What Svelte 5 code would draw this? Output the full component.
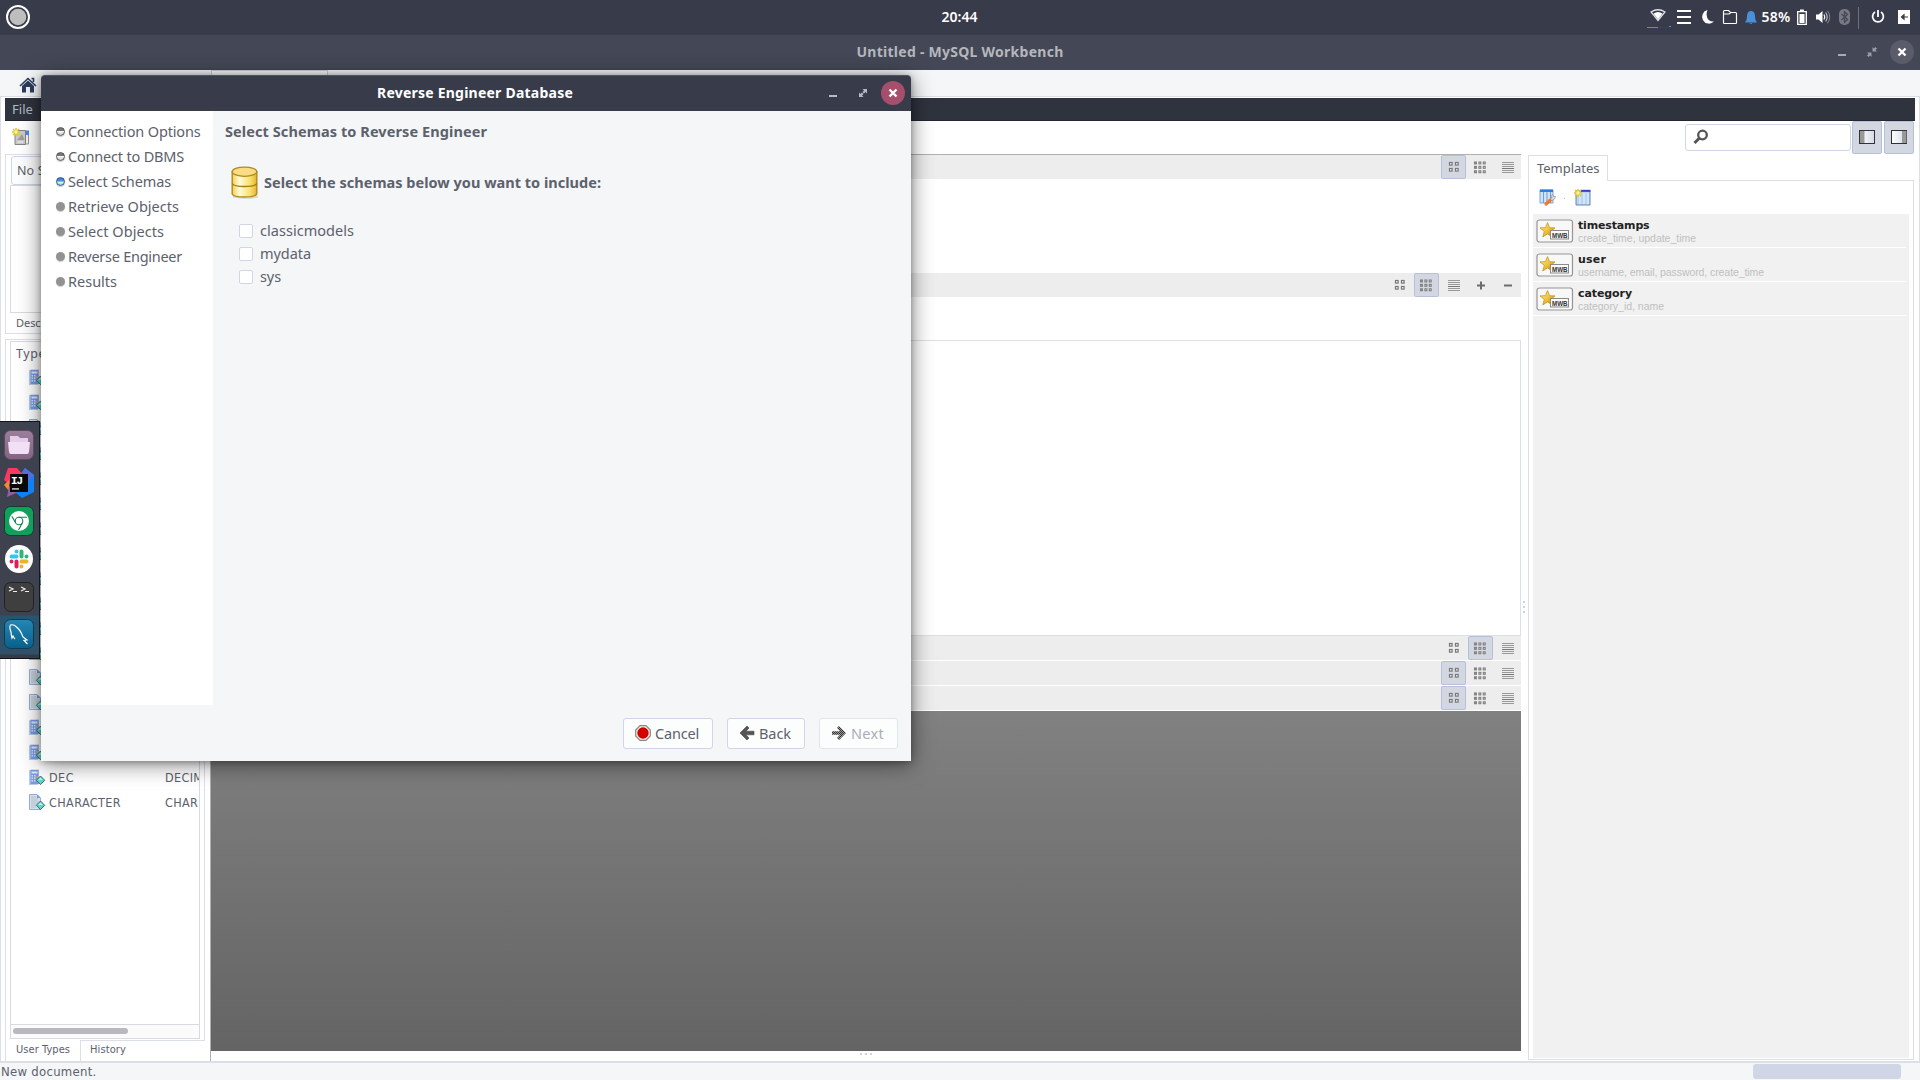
<script>
  // Spreads or tightens a label so it fills the given width in pixels.
  function fit(node, width) {
    const natural = node.getBoundingClientRect().width;
    const count = node.textContent.length;
    node.style.letterSpacing = `${(width - natural) / count}px`;
  }

  const steps = [
    ['Connection Options', 'done', 132.5],
    ['Connect to DBMS', 'done', 116],
    ['Select Schemas', 'current', 103],
    ['Retrieve Objects', 'todo', 111],
    ['Select Objects', 'todo', 96],
    ['Reverse Engineer', 'todo', 114],
    ['Results', 'todo', 49]
  ];
  const schemas = [['classicmodels', 94], ['mydata', 51], ['sys', 21]];
  const types = [
    ...Array.from({ length: 12 }, (_, i) => ({ kind: i < 2 ? 'calc' : 'doc', name: '', def: '' })),
    { kind: 'doc' }, { kind: 'doc' }, { kind: 'calc' }, { kind: 'calc' },
    { kind: 'calc', name: 'DEC', nw: 25, def: 'DECIMAL', dw: 53 },
    { kind: 'doc', name: 'CHARACTER', nw: 72, def: 'CHAR', dw: 33 }
  ];
  const templates = [
    ['timestamps', 'create_time, update_time', 71.5, 118],
    ['user', 'username, email, password, create_time', 28, 186],
    ['category', 'category_id, name', 54, 86]
  ];
</script>

{#snippet grid4()}
  <svg width="12" height="12" viewBox="0 0 12 12" fill="#f8f8f8" stroke="#777" stroke-width="1.2">
    {#each [1.5, 7.5] as y}{#each [1.500, 7.5] as x}<rect {x} {y} width="2.6" height="2.6" />{/each}{/each}
  </svg>
{/snippet}
{#snippet grid9()}
  <svg width="13" height="13" viewBox="0 0 13 13" fill="#e4e4e4" stroke="#808080" stroke-width="1.1">
    {#each [1, 5.4, 9.8] as y}{#each [.5, 4.9, 9.3] as x}<rect {x} {y} width="1.900" height="1.900" />{/each}{/each}
  </svg>
{/snippet}
{#snippet list()}
  <svg width="13" height="14" viewBox="0 0 13 14">
    {#each [2, 4, 6, 8, 10, 12] as y}<rect x="1" {y} width="12" height="1" fill={y === 8 ? '#777' : '#999'} />{/each}
  </svg>
{/snippet}
{#snippet views(active, edit)}
  <div class="views">
    <span class:active={active === 4}>{@render grid4()}</span>
    <span class:active={active === 9}>{@render grid9()}</span>
    <span>{@render list()}</span>
    {#if edit}
      <span><svg width="9" height="9"><path d="M5 .5v8M1 4.500h8" stroke="#6c6c6c" stroke-width="2" /></svg></span>
      <span><svg width="9" height="9"><path d="M1 4.500h8" stroke="#6c6c6c" stroke-width="2" /></svg></span>
    {/if}
  </div>
{/snippet}
{#snippet typeIcon(kind)}
  <svg class="ticon" width="16" height="17" viewBox="0 0 16 17">
    {#if kind === 'calc'}
      <path d="M0 1.500 1.500.5h8.500v14L8.500 16H0z" fill="#b9cbe6" /><path d="M1.500 1h8v14h-8z" fill="#789be0" />
      <path d="M2.500 2.500h6v2h-6z" fill="#dbe9ff" />
      <path d="M2.500 6h1.500v1.500H2.500zM5 6h1.500v1.500H5zM2.500 8.500h1.500V10H2.500zM5 8.500h1.500V10H5zM2.500 11h1.500v1.500H2.500zM5 11h1.500v1.500H5z" fill="#cfe0ff" />
      <path d="M7.300 7h1.700v2H7.300z" fill="#f0946e" />
    {:else}
      <path d="M.5.5h7.500l3.500 3.500v11.500H.5z" fill="#d5dfec" stroke="#7f9cc6" stroke-width=".8" /><path d="M8 .5V4h3.500z" fill="#6e9be0" />
      <path d="M2 3h5M2 5h7M2 7h7M2 9h7M2 11h5M2 13h5" stroke="#a9b6bd" stroke-width=".8" />
    {/if}
    <path d="M11.500 7 15.700 11.300 11.500 15.600 7.300 11.300z" fill="#58d8c4" stroke="#3e6a78" /><path d="M11.500 8.500 14 11H9z" fill="#b8f5ea" />
  </svg>
{/snippet}
{#snippet star()}
  <svg width="38" height="25" viewBox="0 0 38 25">
    <defs><linearGradient id="starfill" x1="0" y1="0" x2="1" y2="1"><stop offset="0" stop-color="#fff3a0" /><stop offset=".5" stop-color="#f2c53c" /><stop offset="1" stop-color="#b97d18" /></linearGradient></defs>
    <rect x="1" y="1" width="35.500" height="22" rx="2.500" fill="#f8f8f8" stroke="#969696" stroke-width="1.200" />
    <path d="m11.500 3.500 2 5.200 5.500.2-4.300 3.500 1.500 5.500-4.700-3-4.700 3 1.500-5.500L4 8.900l5.500-.2z" fill="url(#starfill)" stroke="#c39426" stroke-width=".8" />
    <rect x="14.500" y="11.500" width="18" height="8.500" fill="#fafafa" stroke="#8a8a8a" />
    <text x="16" y="18.800" textLength="15.500" lengthAdjust="spacingAndGlyphs" class="mwb">MWB</text>
  </svg>
{/snippet}
{#snippet sparkle()}
  <path d="M4 0v8M0 4h8M1 1l6 6M7 1 1 7" stroke="#e6c52c" stroke-width="1.500" /><circle cx="4" cy="4" r="1.800" fill="#fff6a0" />
{/snippet}

<div class="screen">
  <header class="top">
    <svg class="logo" width="24" height="24"><circle cx="12" cy="12" r="11" fill="none" stroke="#fff" stroke-width="2" /><circle cx="12" cy="12" r="8.300" fill="#bebebe" /></svg>
    <span class="clock"><b use:fit={36}>20:44</b></span>
    <div class="tray">
      <svg style:width="24px" viewBox="0 0 24 24"><path d="M4 7Q11 2.500 18 7L11 15.500z" fill="none" stroke="#dfe1e8" stroke-width="1.300" /><path d="M6.500 8.500Q11 5.500 15.500 8.500L11 14.500z" fill="#fff" /><path d="M0 22.500h11M22 21.500h2" stroke="#4c91dd" /><path d="M11 22.500h11" stroke="#2b4468" /></svg>
      <svg style:width="26px" viewBox="0 0 26 24"><path d="M6 6h14M6 12h14M6 18h14" stroke="#fff" stroke-width="2" /></svg>
      <svg style:width="22px" viewBox="0 0 22 24"><path d="M10.500 5a6.900 6.900 0 1 0 6.500 11.500C11 17.500 8 11 10.500 5z" fill="#fff" /></svg>
      <svg style:width="22px" viewBox="0 0 22 24"><path d="M4.500 18V6.500q0-1 1-1h4l2 2h5q1 0 1 1V18q0 .5-1 .5h-11q-1 0-1-.5zM4.500 9h5.500l2-1.500" fill="none" stroke="#fff" stroke-width="1.200" /></svg>
      <svg style:width="20px" viewBox="0 0 20 24"><path d="M4 17.500q2-2 2-6Q6 6 10 6t4 5.500q0 4 2 6zM8.500 18h3q-1.500 2-3 0z" fill="#4a90d9" /></svg>
      <span class="pct"><b use:fit={29}>58%</b></span>
      <svg style:width="22px" viewBox="0 0 22 24"><path d="M6.700 6.700h8.600v12.600H6.700z" fill="none" stroke="#fff" stroke-width="1.300" /><path d="M8.500 9h5v9h-5zM9 4.500h4v1.500H9z" fill="#fff" /></svg>
      <svg style:width="20px" viewBox="0 0 20 24"><path d="M3 9.500h2.500L9.500 6v12L5.500 14.500H3z" fill="#fff" /><path d="M11 9.500q1.500 2.500 0 5" fill="none" stroke="#fff" stroke-width="1.200" /><path d="M12.700 7.500q3 4.500 0 9" fill="none" stroke="#c5c7cd" stroke-width="1.100" /><path d="M14.500 5.800q4.500 6 0 12.500" fill="none" stroke="#868994" /></svg>
      <svg style:width="23px" viewBox="0 0 23 24"><rect x="6" y="4" width="11" height="16" rx="5" fill="#777a84" /><path d="m8.500 9 6 5.500-3 2.800V6.700l3 2.800-6 5.500" fill="none" stroke="#444755" stroke-width="1.200" /></svg>
      <i></i>
      <svg style:width="34px" viewBox="0 0 34 24"><path d="M14 7a5.400 5.400 0 1 0 6 0M17 5v7" fill="none" stroke="#fff" stroke-width="1.800" /></svg>
      <svg style:width="18px" viewBox="0 0 18 24"><path d="M3 5h12v14H3z" fill="#fff" /><path d="M6 12h7M9 9.800 6.500 12l2.500 2.200z" fill="#383b49" stroke="#383b49" stroke-width="1.200" /></svg>
    </div>
  </header>
  <div class="apptitle">
    <b use:fit={207}>Untitled - MySQL Workbench</b>
    <div class="wm">
      <svg width="8" height="12"><path d="M0 9h8" stroke="#a9abb3" stroke-width="2" /></svg>
      <svg width="10" height="10" viewBox="0 0 10 10"><path d="M5.500 0v4.500H10L8.500 3 10 1.500 8.500 0 7 1.500zM4.500 10V5.500H0L1.500 7 0 8.500 1.500 10 3 8.500z" fill="#9a9ca6" /></svg>
      <svg width="24" height="24"><circle cx="12" cy="12" r="12" fill="#5a5d69" /><path d="m8.500 8.500 7 7m0-7-7 7" stroke="#fff" stroke-width="2.400" /></svg>
    </div>
  </div>
  <div class="tabstrip">
    <svg width="18" height="16" viewBox="0 0 18 16"><path d="M3 9v6.500h4V10h4v5.500h4V9L9 3.500z" fill="#2b3c5e" /><path d="M1 9 9 1.500 17 9M12.500 1.500h2V5" fill="none" stroke="#2b3c5e" stroke-width="1.600" /></svg>
    <div class="doctab"></div>
  </div>

  <div class="app">
    <nav><span use:fit={21}>File</span></nav>
    <div class="toolbar">
      <svg width="18" height="18" viewBox="0 0 18 18"><path d="M9 5h7.500v11H9z" fill="#f4f4f4" stroke="#999" /><path d="M13 2.500h4v4.500h-4z" fill="#4b8de0" /><path d="M3 2.500h10.500v14H3z" fill="#c9c9c9" stroke="#858585" /><path d="M5.500 14h6" stroke="#f4f4f4" /><path d="m5 12 2-2 3-4 2.500 6z" fill="#9e9e9e" /><g>{@render sparkle()}</g></svg>
      <div class="right">
        <div class="search"><svg width="16" height="16" viewBox="0 0 16 16"><circle cx="9.500" cy="6" r="4.300" fill="none" stroke="#555" stroke-width="2.300" /><path d="M6.500 9 1.500 14" stroke="#555" stroke-width="3" /></svg></div>
        {#each [1, 11] as x}
          <div class="toggle"><svg width="16" height="14" viewBox="0 0 16 14"><defs><linearGradient id="pane" x2="1"><stop stop-color="#fff" /><stop offset="1" stop-color="#d5dbe6" /></linearGradient></defs><rect x=".5" y=".5" width="15" height="13" fill="url(#pane)" stroke="#333" /><rect {x} y="1" width="4.500" height="12" fill="#999" /></svg></div>
        {/each}
      </div>
    </div>
    <main>
      <aside class="left">
        <section class="desc">
          <div class="select"><span use:fit={75}>No Selection</span></div>
          <div class="area"></div>
          <small><span use:fit={92}>Description Editor</span></small>
        </section>
        <section class="types">
          <div class="tree">
            <div class="thead"><span use:fit={30}>Type</span></div>
            {#each types as t}
              <div class="trow">
                {@render typeIcon(t.kind)}
                {#if t.name}<span class="tname"><span use:fit={t.nw}>{t.name}</span></span><span use:fit={t.dw}>{t.def}</span>{/if}
              </div>
            {/each}
            <div class="scroll"><div></div></div>
          </div>
        </section>
        <div class="ltabs"><div class="on"><span use:fit={54}>User Types</span></div><div class="off"><span use:fit={36}>History</span></div></div>
      </aside>

      <section class="center">
        <div class="bar">{@render views(4, false)}</div>
        <div class="blank"></div>
        <div class="bar">{@render views(9, true)}</div>
        <div class="blank small"></div>
        <div class="sheet"></div>
        <div class="bar">{@render views(9, false)}</div>
        <div class="bar">{@render views(4, false)}</div>
        <div class="bar">{@render views(4, false)}</div>
        <div class="canvas"></div>
        <div class="grip"><i></i><i></i><i></i></div>
      </section>
      <div class="vgrip"><i></i><i></i><i></i></div>

      <aside class="rightpane">
        <div class="rtab"><span use:fit={62.5}>Templates</span></div>
        <div class="panel">
          <div class="ptools">
            <svg width="17" height="17" viewBox="0 0 17 17"><path d="M1 1h13v13H1z" fill="#cfe2f8" stroke="#7aa5dc" /><path d="M1 .5h13v2.500H1z" fill="#2d7ee0" /><path d="M4.500 3v11M8 3v11M11.500 3v11" stroke="#6e9dda" /><path d="m7 15 5.500-5" stroke="#ee7a2c" stroke-width="3.200" stroke-linecap="round" /><path d="m11 10 2-1.500-.5-2 1.500-1 .5 2h2l-.5 2-3 2z" fill="#ddd" stroke="#888" stroke-width=".6" /></svg>
            <i></i>
            <svg width="17" height="17" viewBox="0 0 17 17"><path d="M2 2h14v14H2z" fill="#b9d3f3" stroke="#6686b4" /><path d="M7 .8h9.500v2H7z" fill="#3a3cd0" /><path d="M6 4v11M10 4v11M14 4v11" stroke="#eef6ff" /><g>{@render sparkle()}</g></svg>
          </div>
          <div class="tlist">
            {#each templates as [name, cols, nw, cw]}
              <div class="tpl">{@render star()}<div><b><span use:fit={nw}>{name}</span></b><em><span use:fit={cw}>{cols}</span></em></div></div>
            {/each}
          </div>
        </div>
      </aside>
    </main>
  </div>
  <footer><span use:fit={95.500}>New document.</span><div></div></footer>

  <div class="dialog">
    <div class="dtitle">
      <b use:fit={196}>Reverse Engineer Database</b>
      <div class="wm">
        <svg width="8" height="12"><path d="M0 9h8" stroke="#b8bac1" stroke-width="2" /></svg>
        <svg width="10" height="10" viewBox="0 0 10 10"><path d="M4.500 1H9v4.500L7.500 4 6 5.500 4.500 4 6 2.500zM5.500 9H1V4.500L2.500 6 4 4.500 5.500 6 4 7.500z" fill="#b8bac1" /></svg>
        <svg width="24" height="24"><circle cx="12" cy="12" r="12" fill="#a54f6d" /><path d="m8.500 8.500 7 7m0-7-7 7" stroke="#fff" stroke-width="2.400" /></svg>
      </div>
    </div>
    <div class="dbody">
      <ul>
        {#each steps as [label, state, w]}<li><i class={state}></i><span use:fit={w}>{label}</span></li>{/each}
      </ul>
      <div class="content">
        <h1><span use:fit={262}>Select Schemas to Reverse Engineer</span></h1>
        <div class="prompt">
          <svg width="27" height="34" viewBox="0 0 27 34">
            <defs><linearGradient id="gold" x2="1"><stop stop-color="#f4cf50" /><stop offset=".3" stop-color="#fffbd8" /><stop offset=".75" stop-color="#f9de68" /><stop offset="1" stop-color="#e3b42e" /></linearGradient></defs>
            <path d="M2 29.500q12 5 25 0v2q-12 2.500-25 0z" fill="#0002" />
            <path d="M1.200 6v22C3 32 24 32 25.800 28V6z" fill="url(#gold)" stroke="#b08a1c" stroke-width="1.400" />
            <path d="M1.200 17.500c2 4 22.600 4 24.600 0" fill="none" stroke="#a37c12" stroke-width="1.400" />
            <ellipse cx="13.500" cy="5.700" rx="12.300" ry="4.600" fill="#fbdc86" stroke="#b08a1c" stroke-width="1.300" />
          </svg>
          <b use:fit={337}>Select the schemas below you want to include:</b>
        </div>
        {#each schemas as [name, w]}<label><i></i><span use:fit={w}>{name}</span></label>{/each}
      </div>
    </div>
    <div class="actions">
      <button class="cancel"><svg width="16" height="16" viewBox="0 0 16 16"><path d="M5 .7h6L15.300 5v6L11 15.300H5L.7 11V5z" fill="#eee" stroke="#85897d" stroke-width="1.200" /><circle cx="8" cy="8" r="5.700" fill="#d40000" /></svg><span use:fit={44}>Cancel</span></button>
      <button class="back"><svg width="16" height="16" viewBox="0 0 16 16"><path d="m1 8 7-7 2 2-3 3.200h8v3.600H7l3 3.200-2 2z" fill="#555" stroke="#444" stroke-width=".6" /></svg><span use:fit={32}>Back</span></button>
      <button class="next"><svg width="16" height="16" viewBox="0 0 16 16"><defs><pattern id="dither" width="2" height="2" patternUnits="userSpaceOnUse"><rect width="2" height="2" fill="#999" /><path d="M0 0h1v1H0zM1 1h1v1H1z" fill="#333" /></pattern></defs><path d="M15 8 8 1 6 3l3 3.200H1v3.600h8L6 13l2 2z" fill="url(#dither)" /></svg><span use:fit={33}>Next</span></button>
    </div>
  </div>

  <div class="dock">
    <svg width="30" height="30" viewBox="0 0 30 30"><defs><linearGradient id="mauve" y2="1" x2="0"><stop stop-color="#9b7f9a" /><stop offset="1" stop-color="#836383" /></linearGradient></defs><rect x=".5" y=".5" width="29" height="29" rx="6" fill="url(#mauve)" stroke="#5b4a60" /><path d="M6 6h8l2 2h8v5H6z" fill="#e6cdea" /><path d="M4 12h22l-1 10q-.2 2-2 2H7q-1.800 0-2-2z" fill="#f1e0f5" /></svg>
    <svg width="30" height="30" viewBox="0 0 30 30"><path d="M4 0h9l6 7-6 12-8-3-5-4z" fill="#fc3764" /><path d="m0 17 5-5v11z" fill="#f28c26" /><path d="m5 18 12 5-14 6z" fill="#955aa5" /><path d="m21 0 9 7v17l-12 6-6-5 4-18z" fill="#1080f8" /><path d="m21 0 9 7-6 7-8-7z" fill="#5370d8" /><path d="M6 6h18v18H6z" fill="#080808" /><path d="M8 20h7v1.800H8z" fill="#aaa" /><text x="7" y="16" textLength="12" class="ij">IJ</text></svg>
    <svg width="30" height="30" viewBox="0 0 30 30"><rect x=".5" y=".5" width="29" height="29" rx="6" fill="#10a05c" stroke="#123c30" /><circle cx="15" cy="15" r="10" fill="#fff" /><circle cx="15" cy="15" r="3.800" fill="none" stroke="#16804f" stroke-width="1.100" /><path d="M15 11.200h8M11.700 16.900 7.800 10.200M18.300 16.900 14.500 24" stroke="#16804f" stroke-width="1.100" /></svg>
    <svg width="30" height="30" viewBox="0 0 30 30"><circle cx="15" cy="15" r="14" fill="#fff" /><g stroke-width="4" stroke-linecap="round"><path d="M7.500 12.500h5M12.500 7.500v0" stroke="#36c5f0" /><path d="M17.500 7.500v5M22.500 12.500v0" stroke="#2eb67d" /><path d="M17.500 17.500h5M17.500 22.500v0" stroke="#ecb22e" /><path d="M12.500 17.500v5M7.500 17.500v0" stroke="#e01e5a" /></g></svg>
    <svg width="30" height="30" viewBox="0 0 30 30"><rect x=".5" y=".5" width="29" height="29" rx="6" fill="#3f3f3f" stroke="#222" /><path d="m5 5 4 2-4 2M17 5l4 2-4 2" fill="none" stroke="#eee" stroke-width="1.200" /><path d="M9 9.500h4M21 9.500h4" stroke="#eee" stroke-width="1.200" /></svg>
    <svg width="30" height="30" viewBox="0 0 30 30"><defs><linearGradient id="sea" y2="1" x2="0"><stop stop-color="#2587b4" /><stop offset="1" stop-color="#07608c" /></linearGradient></defs><rect x=".5" y=".5" width="29" height="29" rx="6" fill="url(#sea)" stroke="#123b52" /><path d="M11 20q-1-1-2-3l-1 2q-1-4-1-6Q5 8 6.500 6q3-1 6 2 4 3 6.500 10l4 3-3 .5 3.500 3.500" fill="none" stroke="#fff" stroke-width="1.200" /></svg>
  </div>
</div>

<style>
  :global(body) { margin: 0; overflow: hidden; }
  * { box-sizing: border-box; }
  .screen { position: relative; width: 1920px; height: 1080px; display: flex; flex-direction: column; background: #fff; overflow: hidden; font: 15px/20px "Noto Sans", "Open Sans", sans-serif; color: #5c616c; white-space: nowrap; }
  svg { display: block; flex: none; overflow: visible; }
  span { display: inline-block; }
  b { display: inline-block; font-weight: 700; }

  .top { height: 35px; flex: none; background: linear-gradient(#383b49 33px, #363946 34px, #3b3e4b); display: grid; grid-template-columns: 1fr auto 1fr; align-items: center; color: #fff; padding: 0 7px 0 6px; }
  .logo { margin-top: -1px; }
  .clock { font-size: 14px; margin-top: -2px; }
  .clock b, .pct b { font-weight: 600; }
  .tray { display: flex; justify-content: flex-end; align-items: center; }
  .tray svg { height: 24px; margin-top: -1px; }
  .tray .pct { width: 30px; font-size: 14px; text-align: center; margin-top: -2px; }
  .tray i { width: 1px; height: 22px; background: #6e717c; margin: 0 2px; }

  .apptitle, .dtitle { position: relative; display: flex; align-items: center; justify-content: center; flex: none; font-size: 14px; }
  .apptitle { height: 35px; background: #444755; color: #b5b7bd; padding-bottom: 1px; }
  .wm { position: absolute; right: 6px; top: 0; height: 100%; display: flex; align-items: center; gap: 18px; }
  .apptitle .wm { height: 34px; }
  .dtitle .wm { height: 34px; }
  .wm svg:nth-child(1) { margin-right: 3px; }
  .wm svg:nth-child(2) { margin-right: -5px; }

  .tabstrip { height: 27px; flex: none; background: #f4f6f8; border-bottom: 1px solid #dcdfe8; display: flex; padding-left: 19px; }
  .tabstrip svg { margin-top: 7px; }
  .doctab { width: 117px; height: 26px; margin-left: 174px; border: 1px solid #c9cfdf; border-bottom: 0; background: #fcfcfd; }

  .app { flex: 1; min-height: 0; display: flex; flex-direction: column; border: 1px solid #dcdfe8; border-top: 0; padding: 1px 4px 0; }
  nav { height: 23px; flex: none; background: #2f333e; border-bottom: 1px solid #222631; color: #b5b9c2; font-size: 13px; line-height: 22px; padding-left: 7px; }
  .toolbar { height: 33px; flex: none; display: flex; justify-content: space-between; padding-left: 7px; }
  .toolbar > svg { margin-top: 7px; }
  .right { display: flex; margin-right: 1px; }
  .search { width: 166px; height: 27px; margin: 3px 1px 0 0; border: 1px solid #cfd6e6; border-radius: 3px; padding: 4px 7px; }
  .toggle { width: 30px; height: 33px; border: 1px solid #b7c0d8; border-radius: 2px; background: #d3d7e2; display: grid; place-items: center; padding-bottom: 2px; }
  .toggle + .toggle { margin-left: 2px; }
  main { flex: 1; min-height: 0; display: flex; }

  .left { width: 200px; display: flex; flex-direction: column; flex: none; }
  .desc { height: 180px; border: 1px solid #dcdfe8; padding: 1px 4px 0; flex: none; }
  .select { height: 29px; margin-left: 1px; border: 1px solid #cfd6e6; border-radius: 3px; background: #fcfdfd; font-size: 12.500px; line-height: 28px; padding-left: 5px; }
  .area { height: 128px; border: 1px solid #d8dadf; }
  small { display: block; font-size: 11px; line-height: 19px; padding-left: 6px; }
  .types { height: 702px; margin-top: 5px; border: 1px solid #dcdfe8; padding: 1px 4px 0; flex: none; }
  .tree { height: 698px; border: 1px solid #d8dadf; display: flex; flex-direction: column; font-size: 12.500px; }
  .thead { height: 23px; line-height: 24px; padding-left: 5px; flex: none; }
  .trow { height: 25px; flex: none; display: flex; align-items: center; padding-left: 18px; overflow: hidden; font: 12.500px/24px "DejaVu Sans Condensed", "DejaVu Sans", sans-serif; }
  .ticon { margin-right: 4px; }
  .tname { width: 116px; flex: none; }
  .scroll { margin-top: auto; height: 14px; background: #fbfbfb; border-top: 1px solid #d8dadf; padding: 3px 2px; }
  .scroll div { width: 115px; height: 6px; border-radius: 3px; background: #b8b9be; }
  .ltabs { display: flex; font: 11px/18px "DejaVu Sans Condensed", "DejaVu Sans", sans-serif; }
  .ltabs .on { width: 76px; height: 22px; margin-top: -1px; border: 1px solid #dcdfe8; border-top: 0; background: #fff; padding-left: 10px; line-height: 20px; }
  .ltabs .off { padding-left: 9px; line-height: 17px; }

  .center { width: 1311px; margin-left: 5px; display: flex; flex-direction: column; flex: none; border-top: 1px solid #b0b0b0; border-left: 1px solid #b0b0b0; }
  .bar { height: 24px; flex: none; background: #ededed; display: flex; justify-content: flex-end; padding-right: 1px; }
  .bar + .bar { margin-top: 1px; }
  .views { display: flex; gap: 2px; }
  .views span { width: 25px; height: 24px; display: grid; place-items: center; border: 1px solid transparent; border-radius: 2px; }
  .views .active { background: #d3d7e2; border-color: #b7c0d8; }
  .blank { height: 94px; flex: none; }
  .small { height: 43px; }
  .sheet { height: 296px; flex: none; border: 1px solid #dce0e8; }
  .canvas { height: 340px; flex: none; margin-top: 1px; background: linear-gradient(#818181, #646464); }
  .grip { display: flex; justify-content: center; gap: 3px; padding-top: 2px; }
  .grip i, .vgrip i { width: 2px; height: 2px; background: #cfd3e4; }
  .vgrip { width: 7px; flex: none; display: flex; flex-direction: column; gap: 3px; padding: 447px 0 0 2px; }

  .rightpane { flex: 1; min-width: 0; display: flex; flex-direction: column; padding: 1px 1px 0 0; }
  .rtab { width: 80px; height: 26px; flex: none; border: 1px solid #dcdfe8; border-bottom: 0; background: #fff; position: relative; z-index: 1; font-size: 13px; line-height: 24px; padding-left: 8px; }
  .panel { height: 880px; flex: none; margin-top: -1px; border: 1px solid #dcdfe8; padding: 0 4px 1px; display: flex; flex-direction: column; }
  .ptools { height: 33px; flex: none; display: flex; align-items: center; padding-left: 6px; }
  .ptools i { width: 1px; height: 1px; background: #bbb; margin: 2px 9px 0 8px; }
  .tlist { flex: 1; background: #f1f1f1; }
  .tpl { height: 34px; margin-right: 3px; border-bottom: 1px solid #fff; display: flex; padding: 5px 0 0 3px; }
  .tpl > div { padding-left: 4px; }
  .tpl b { display: block; font: bold 11px/13px "DejaVu Sans", sans-serif; color: #222; }
  .tpl em { display: block; font: 10.500px/12px "Liberation Sans", sans-serif; color: #bfbfbf; margin-top: -.5px; }
  .mwb { font: bold 8px "Liberation Sans", sans-serif; fill: #333; }
  .ij { font: bold 11px "Liberation Mono", monospace; fill: #fff; }

  footer { height: 18px; flex: none; background: #f4f6f8; border-top: 1px solid #dcdfe8; display: flex; justify-content: space-between; padding: 0 19px 0 1px; font: 13px/17px "DejaVu Sans Condensed", "DejaVu Sans", sans-serif; }
  footer div { width: 148px; height: 15px; margin-top: 1px; border-radius: 3px; background: #d0d6e6; }

  .dialog { position: absolute; left: 41px; top: 75px; width: 870px; height: 686px; display: flex; flex-direction: column; background: #f4f6f8; border-radius: 4px 4px 0 0; box-shadow: 0 3px 22px rgba(0, 0, 0, .5), 0 1px 6px rgba(0, 0, 0, .28); }
  .dtitle { height: 36px; background: #383b49; border-top: 1px solid #4a5560; border-radius: 4px 4px 0 0; color: #fff; padding: 0 2px 2px 0; }
  .dbody { display: flex; height: 594px; flex: none; }
  ul { list-style: none; margin: 0; padding: 7px 0 0 15px; width: 172px; background: #fff; font-size: 14.500px; }
  li { height: 25px; display: flex; align-items: center; }
  li i { width: 9px; height: 9px; margin: 2px 3px 0 0; border-radius: 50%; background: #929292; box-shadow: 0 1px 1px #ccc; }
  li .done { background: linear-gradient(#777 40%, #f4f4f4 50%, #ccc); border: 1px solid #555; }
  li .current { background: linear-gradient(#2f83d8 10%, #4b9be8 45%, #e4f2ff 60%, #8ec4f4); border: 1px solid #3c5570; }
  .content { padding: 10px 0 0 12px; flex: 1; }
  h1 { margin: 0; font-size: 14.500px; line-height: 21px; font-weight: 700; height: 23px; }
  .prompt { display: flex; align-items: center; height: 34px; margin: 22px 0 18px 6px; gap: 6px; font-size: 14.500px; }
  .prompt b { margin-top: -2px; }
  label { display: flex; align-items: center; height: 23px; margin-left: 14px; font-size: 14.500px; line-height: 22px; }
  label i { width: 14px; height: 14px; margin-top: 2px; background: #fff; border: 1px solid #cfd6e6; border-radius: 2px; margin-right: 7px; }
  .actions { display: flex; padding: 13px 13px 0 0; justify-content: flex-end; }
  button { height: 31px; border: 1px solid #cfd6e8; border-radius: 3px; background: #fcfdfd; font: 14.500px/20px "Noto Sans", sans-serif; color: #5c616c; display: flex; align-items: center; padding: 0 0 2px 11px; gap: 4px; margin-left: 14px; }
  .cancel { width: 90px; }
  .back { width: 78px; }
  .next { width: 79px; color: #a9adb5; border-color: #e2e5ee; }

  .dock { position: absolute; left: 0; top: 421px; width: 40px; height: 238px; background: linear-gradient(#3e414e 193px, #26566f 194px, #315068 232px, #363947 233px); border: 1px solid #14141f; border-left: 0; display: flex; flex-direction: column; gap: 8px; padding: 8px 0 0 4px; }
  .dock svg { margin-top: -.1px; }
</style>
